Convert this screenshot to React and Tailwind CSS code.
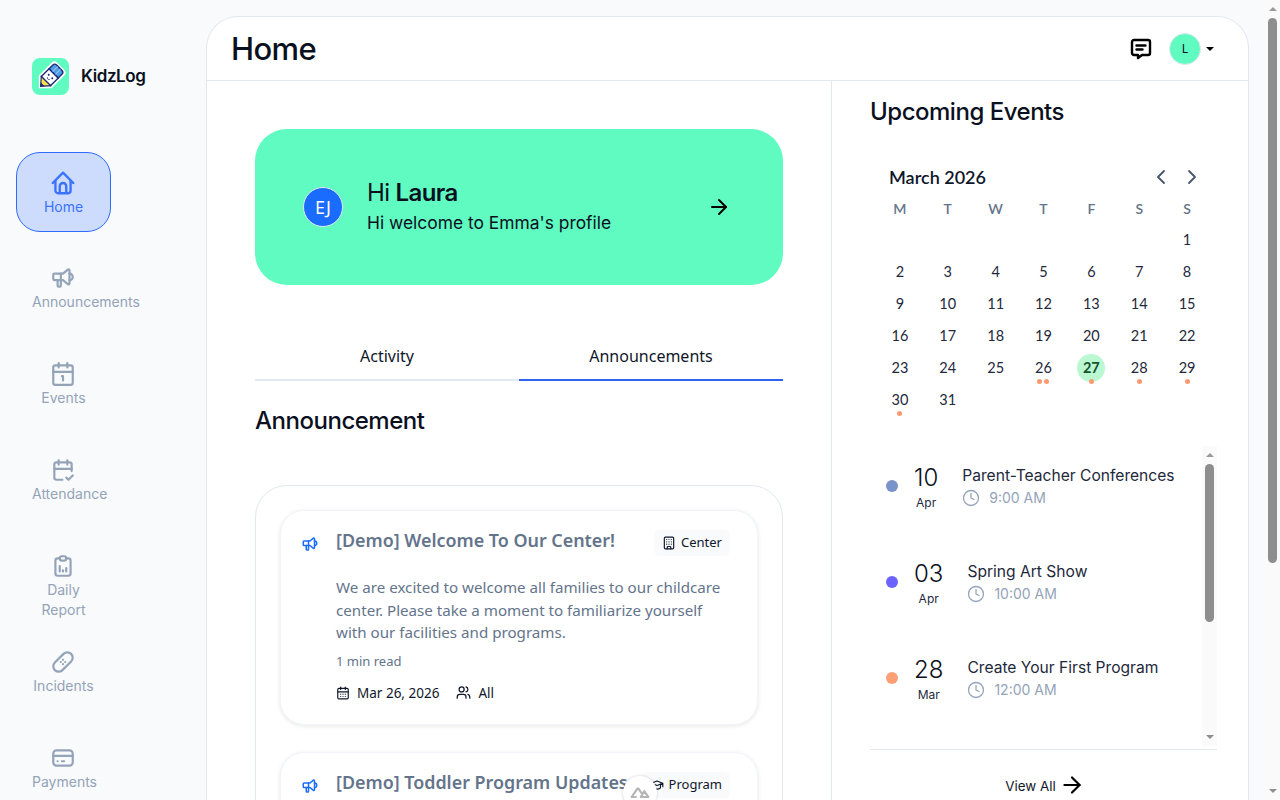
import {
  ArrowRight,
  Building,
  Calendar1,
  CalendarDays,
  ChevronLeft,
  ChevronRight,
  Clock,
  Users,
} from 'lucide-react'
import {
  TbBandage,
  TbCalendarCheck,
  TbCreditCard,
  TbReportAnalytics,
  TbSchool,
  TbSpeakerphone,
} from 'react-icons/tb'

const HomeIcon = ({ className }) => (
  <svg viewBox="0 0 24 24" fill="none" stroke="currentColor" strokeWidth="2.2" strokeLinecap="round" strokeLinejoin="round" className={className}>
    <path d="M2.5 12 12 2.5l9.5 9.5" />
    <path d="M5 10v9a2.5 2.5 0 0 0 2.5 2.5h9A2.5 2.5 0 0 0 19 19v-9" />
    <path d="M9 21v-6a3 3 0 0 1 6 0v6" />
  </svg>
)

const ChatIcon = ({ className }) => (
  <svg viewBox="0 0 24 24" fill="none" stroke="currentColor" strokeWidth="2.4" strokeLinecap="round" strokeLinejoin="round" className={className}>
    <path d="M5 3h14a2 2 0 0 1 2 2v11a2 2 0 0 1-2 2h-6l-4 3v-3H5a2 2 0 0 1-2-2V5a2 2 0 0 1 2-2Z" />
    <path d="M7.5 8.5h9M7.5 12.5h6" />
  </svg>
)

const Logo = () => (
  <div className="flex h-[37px] w-[37px] items-center justify-center rounded-lg bg-[#5ffbc1]">
    <svg viewBox="0 0 37 37" className="h-[37px] w-[37px]">
      <g transform="rotate(45 18.5 18.5)">
        <path d="M9.5 8a4 4 0 0 1 4-4h10a4 4 0 0 1 4 4v18l-9 9-9-9Z" fill="#fff" />
        <path d="M12 14h13v11h-13Z" fill="#fff" stroke="#1e2a78" strokeWidth="1.4" />
        <path d="M12 14V9a3 3 0 0 1 3-3h7a3 3 0 0 1 3 3v5Z" fill="#4f9be8" stroke="#1e2a78" strokeWidth="1.4" />
        <path d="M16.5 6.5v7M20.5 6.5v7" stroke="#8ec5f4" strokeWidth="1.2" />
        <path d="M12 25h13l-6.5 7.5Z" fill="#fde047" stroke="#1e2a78" strokeWidth="1.2" />
        <path d="M16 29.5h5L18.5 33Z" fill="#1e2a78" />
        <circle cx="16" cy="18.5" r="1" fill="#1e2a78" />
        <circle cx="21" cy="18.5" r="1" fill="#1e2a78" />
        <path d="M17 21.2a1.6 1.6 0 0 0 3 0" fill="none" stroke="#1e2a78" strokeWidth="0.8" />
      </g>
    </svg>
  </div>
)

const navItems = [
  { label: 'Home', Icon: HomeIcon, active: true },
  { label: 'Announcements', Icon: TbSpeakerphone },
  { label: 'Events', Icon: Calendar1 },
  { label: 'Attendance', Icon: TbCalendarCheck },
  { label: 'Daily Report', Icon: TbReportAnalytics },
  { label: 'Incidents', Icon: TbBandage },
  { label: 'Payments', Icon: TbCreditCard },
]

const Sidebar = () => (
  <aside className="w-[206px] shrink-0 pl-4">
    <div className="flex h-[152px] items-start gap-3 pl-4 pt-[58px]">
      <Logo />
      <span className="mt-[6px] text-[17px] leading-6 font-semibold tracking-tight text-[#0b1021]">KidzLog</span>
    </div>
    <nav className="flex flex-col gap-4">
      {navItems.map(({ label, Icon, active }) => (
        <div
          key={label}
          className={`flex h-20 w-[95px] flex-col items-center rounded-[24px] border px-4 text-center ${
            active ? 'border-[#2f6bff] bg-[#cddcfd] pt-[17px] text-[#3b73ff]' : 'border-transparent pt-[16px] text-[#94a3b8]'
          }`}
        >
          <Icon className="mr-[1px] h-[26px] w-[26px] shrink-0" />
          <span className="mt-[1px] w-[63px] text-sm leading-5">{label}</span>
        </div>
      ))}
    </nav>
  </aside>
)

// native scrollbars don't show in the capture, so both are drawn
const ScrollBar = ({ thumb, className }) => (
  <div className={`flex w-[15px] shrink-0 flex-col items-center bg-[#fafafa] ${className}`}>
    <div className="flex h-[18px] shrink-0 items-center justify-center">
      <span className="h-0 w-0 border-x-4 border-b-4 border-x-transparent border-b-[#999999]" />
    </div>
    <div className={`w-[9px] shrink-0 rounded-full bg-[#8e8e8e] ${thumb}`} />
    <div className="flex-1" />
    <div className="flex h-[18px] shrink-0 items-center justify-center">
      <span className="h-0 w-0 border-x-4 border-t-4 border-x-transparent border-t-[#8e8e8e]" />
    </div>
  </div>
)

const NewsCard = ({ title, tag, TagIcon, children }) => (
  <div className="rounded-[24px] border border-[#f1f5f9] bg-white pl-[20px] pr-[27px] pt-[15px] shadow-[0_1px_4px_rgba(15,23,42,0.1)]">
    <div className="flex items-start">
      <TbSpeakerphone className="mt-[9px] h-[18px] w-[18px] shrink-0 text-[#1a6bff]" />
      <h3 className="ml-[17px] flex-1 font-['Noto_Sans'] text-[17.9px] leading-7 font-semibold whitespace-nowrap text-[#64748b]">{title}</h3>
      <span className="mt-[4px] flex h-[26px] items-center gap-[5px] rounded-md bg-[#f8fafc] px-2 font-['Noto_Sans'] text-[13px] text-[#0f172a]">
        <TagIcon className="h-[14px] w-[14px]" />
        {tag}
      </span>
    </div>
    {children}
  </div>
)

const weekDays = ['M', 'T', 'W', 'T', 'F', 'S', 'S']
const dotDays = { 26: 2, 27: 1, 28: 1, 29: 1, 30: 1 }

const Calendar = () => {
  const cells = [...Array(6).fill(null), ...Array.from({ length: 31 }, (_, i) => i + 1)]
  return (
    <div className="mt-[33px] px-[6px] font-['Lato']">
      <div className="mb-[6px] flex items-center justify-between pl-[13px] pr-[7px]">
        <span className="text-lg leading-7 font-semibold text-[#0f172a]">March 2026</span>
        <div className="flex gap-[7px] text-[#475569]">
          <ChevronLeft className="h-6 w-6" strokeWidth={1.8} />
          <ChevronRight className="h-6 w-6" strokeWidth={1.8} />
        </div>
      </div>
      <div className="grid grid-cols-7">
        {weekDays.map((d, i) => (
          <span key={i} className="h-[25px] text-center text-sm leading-6 font-semibold text-[#64748b]">{d}</span>
        ))}
        {cells.map((d, i) => (
          <div key={i} className="relative flex h-8 items-center justify-center pt-[4px] text-[14.5px] text-[#1e293b]">
            {d && (
              <span className={d === 27 ? 'flex h-7 w-7 items-center justify-center rounded-full bg-[#bbf7d0] font-bold text-[#14532d]' : ''}>
                {d}
              </span>
            )}
            {dotDays[d] && (
              <span className="absolute top-[29px] flex gap-[2px]">
                {Array.from({ length: dotDays[d] }).map((_, j) => (
                  <span key={j} className="h-[5px] w-[5px] rounded-full bg-[#fb9a6f]" />
                ))}
              </span>
            )}
          </div>
        ))}
      </div>
    </div>
  )
}

const events = [
  { day: '10', month: 'Apr', title: 'Parent-Teacher Conferences', time: '9:00 AM', color: 'bg-[#7a93c8]' },
  { day: '03', month: 'Apr', title: 'Spring Art Show', time: '10:00 AM', color: 'bg-[#6c63ff]' },
  { day: '28', month: 'Mar', title: 'Create Your First Program', time: '12:00 AM', color: 'bg-[#ff9f75]' },
]

const EventList = () => (
  <div className="mt-[32px] flex h-[300px]">
    <div className="min-w-0 flex-1">
      {events.map((e) => (
        <div key={e.title} className="flex h-24 items-start pl-4">
          <span className={`mt-[34px] h-3 w-3 shrink-0 rounded-full ${e.color}`} />
          <div className="ml-4 flex flex-col items-center pt-[16px]">
            <span className="text-2xl leading-8 font-light text-[#0b1021]">{e.day}</span>
            <span className="mt-[1px] text-xs leading-4 text-[#1e293b]">{e.month}</span>
          </div>
          <div className="ml-6 pt-[18px]">
            <div className="text-[15.6px] leading-6 text-[#1e293b]">{e.title}</div>
            <div className="flex h-5 items-center gap-[9px] text-sm text-[#94a3b8]">
              <Clock className="h-[18px] w-[18px]" strokeWidth={1.7} />
              {e.time}
            </div>
          </div>
        </div>
      ))}
    </div>
    <ScrollBar thumb="h-[158px]" />
  </div>
)

export default function App() {
  return (
    <div className="flex h-screen overflow-hidden bg-[#f8fafc] font-['Inter',sans-serif]">
      <Sidebar />
      <main className="mt-4 mr-[31px] min-w-0 flex-1 rounded-t-[32px] border border-b-0 border-[#e2e8f0] bg-white">
        <header className="flex h-16 items-center justify-between border-b border-[#e2e8f0] pl-6 pr-[34px]">
          <h1 className="text-[31px] leading-10 font-[550] tracking-[-0.02em] text-[#0b1021]">Home</h1>
          <div className="flex items-center">
            <ChatIcon className="h-6 w-6 text-black" />
            <span className="ml-4 flex h-8 w-8 items-center justify-center rounded-full border border-[#e2e8f0] bg-[#5ffbc1] font-['Noto_Sans'] text-xs text-[#0b1021]">L</span>
            <span className="ml-[5px] h-0 w-0 border-x-4 border-t-[4px] border-x-transparent border-t-black" />
          </div>
        </header>

        <div className="flex">
          <section className="w-[625px] shrink-0 border-r border-[#e2e8f0] px-12 pt-12">
            <div className="flex h-[156px] items-center rounded-[32px] bg-[#5ffbc1] pl-12 pr-[52px]">
              <span className="flex h-10 w-10 items-center justify-center rounded-full border border-[#e2e8f0] bg-[#1a6bff] font-['Noto_Sans'] text-lg text-white">EJ</span>
              <div className="ml-6 flex-1">
                <div className="text-2xl leading-8 tracking-tight text-[#0b1021]">
                  Hi <span className="font-semibold">Laura</span>
                </div>
                <div className="text-[17.4px] leading-7 text-[#0b1021]">Hi welcome to Emma's profile</div>
              </div>
              <ArrowRight className="h-6 w-6 text-black" />
            </div>

            <div className="mt-[55px] grid grid-cols-2 font-['Noto_Sans'] text-base text-[#0f172a]">
              <div className="h-[41px] border-b-2 border-[#e2e8f0] pt-[4px] text-center leading-6">Activity</div>
              <div className="h-[41px] border-b-2 border-[#2f63eb] pt-[4px] text-center leading-6">Announcements</div>
            </div>

            <h2 className="mt-6 text-2xl leading-8 font-[550] tracking-[-0.02em] text-[#0b1021]">Announcement</h2>

            <div className="mt-[48px] flex h-[700px] flex-col gap-[27px] rounded-t-[32px] border border-[#e2e8f0] px-6 pt-6">
              <NewsCard title="[Demo] Welcome To Our Center!" tag="Center" TagIcon={Building}>
                <div className="pl-[35px]">
                  <p className="mt-[20px] font-['Noto_Sans'] text-[15.15px] leading-[22.5px] text-[#64748b]">
                    We are excited to welcome all families to our childcare center. Please take a moment to familiarize yourself with our facilities and programs.
                  </p>
                  <p className="mt-[7px] font-['Noto_Sans'] text-[13px] leading-5 text-[#64748b]">1 min read</p>
                  <div className="mt-[12px] flex items-center pb-[21px] font-['Noto_Sans'] text-[13.5px] leading-5 text-[#0f172a]">
                    <CalendarDays className="h-[14px] w-[14px]" />
                    <span className="ml-[7px]">Mar 26, 2026</span>
                    <Users className="ml-[17px] h-[15px] w-[15px]" />
                    <span className="ml-[7px]">All</span>
                  </div>
                </div>
              </NewsCard>
              <NewsCard title="[Demo] Toddler Program Updates" tag="Program" TagIcon={TbSchool}>
                <div className="h-[180px]" />
              </NewsCard>
            </div>
          </section>

          <section className="flex-1 pl-[38px] pr-[31px] pt-[13px]">
            <h2 className="text-2xl leading-9 font-[550] tracking-[-0.02em] text-[#0b1021]">Upcoming Events</h2>
            <Calendar />
            <EventList />
            <div className="mt-[3px] flex h-[70px] items-start justify-center gap-[3px] border-t border-[#e2e8f0] pl-[3px] pt-[22px] text-[13.4px] leading-7 text-[#0f172a]">
              View All
              <ArrowRight className="h-[26px] w-[26px] text-black" />
            </div>
          </section>
        </div>
      </main>

      <ScrollBar thumb="h-[545px]" className="fixed inset-y-0 right-0" />

      <div className="fixed bottom-[-10px] left-[623px] flex h-[34px] w-[34px] items-start justify-center rounded-full bg-white pt-[9px] shadow-[0_0_3px_rgba(0,0,0,0.2)]">
        <svg viewBox="0 0 24 16" className="h-[14px] w-5" fill="none" stroke="#b5b5b5" strokeWidth="2.6" strokeLinejoin="round">
          <path d="M9.5 3 2 14h6M9.5 3 15 11M14 14h8l-5-7-4 7Z" />
        </svg>
      </div>
    </div>
  )
}
